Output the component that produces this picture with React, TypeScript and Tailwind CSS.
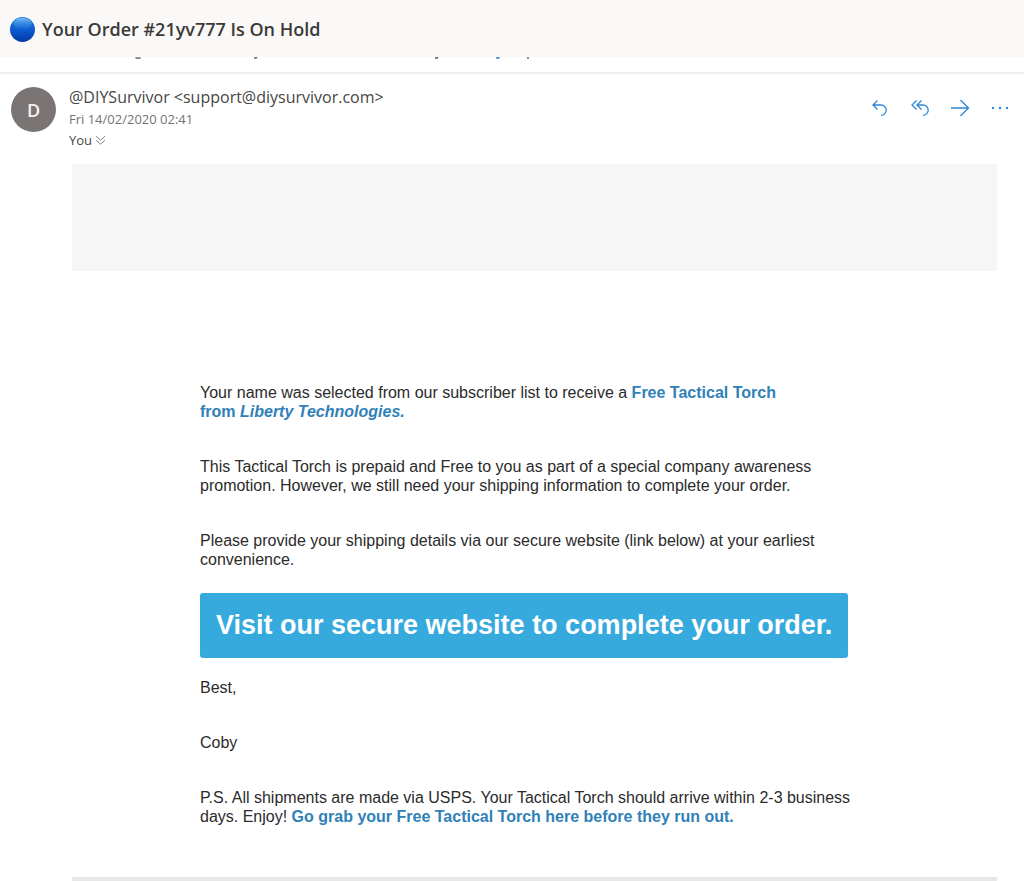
import type { ReactNode } from "react";

function IconButton({ label, children }: { label: string; children: ReactNode }) {
  return (
    <button
      type="button"
      aria-label={label}
      className="flex h-8 w-10 cursor-pointer items-center justify-center text-[#2b88d8]"
    >
      <svg
        width="22"
        height="22"
        viewBox="0 0 22 22"
        fill="none"
        stroke="currentColor"
        strokeWidth="1.3"
        aria-hidden="true"
      >
        {children}
      </svg>
    </button>
  );
}

function SubjectHeader() {
  return (
    <header className="flex h-[57px] items-center gap-[7px] bg-[#faf9f8] px-[10px] pt-px">
      <svg width="25" height="25" viewBox="0 0 24 24" className="shrink-0" aria-hidden="true">
        <defs>
          <linearGradient id="ball" x1="0" y1="0" x2="0" y2="1">
            <stop offset="0" stopColor="#1c78dc" />
            <stop offset="0.45" stopColor="#0d5fd3" />
            <stop offset="1" stopColor="#0439a8" />
          </linearGradient>
          <linearGradient id="shine" x1="0" y1="0" x2="0" y2="1">
            <stop offset="0" stopColor="#7ab8f4" />
            <stop offset="1" stopColor="#2a80e2" stopOpacity="0.2" />
          </linearGradient>
        </defs>
        <circle cx="12" cy="12" r="12" fill="url(#ball)" />
        <ellipse cx="12" cy="6.4" rx="8.8" ry="5.6" fill="url(#shine)" />
      </svg>
      <h1 className="text-lg leading-6 font-semibold text-[#3b3a39]">
        Your Order #21yv777 Is On Hold
      </h1>
    </header>
  );
}

function ScrolledPreview() {
  return (
    <div className="box-content h-[15px] border-b-2 border-[#efeeed]">
      <svg width="540" height="3" viewBox="0 0 540 3" fill="none" strokeWidth="1.4" aria-hidden="true" className="block">
        <path d="M135.5 0.5q2.5 1.5 5 0M254 1h2l1-1M435 1h2l1-1M528 0v2" stroke="#605e5c" />
        <path d="M496 1h2.5l1-1" stroke="#2b88d8" />
      </svg>
    </div>
  );
}

function MessageHeader() {
  return (
    <section className="flex items-start pt-[13px] pr-1 pl-[11px]">
      <div className="flex size-[45px] shrink-0 items-center justify-center rounded-full bg-[#7a7574] text-lg font-semibold text-[#f3f2f1]">
        D
      </div>
      <div className="min-w-0 grow pl-[13px]">
        <p className="text-base leading-[21px] text-[#484644]">
          @DIYSurvivor &lt;support@diysurvivor.com&gt;
        </p>
        <p className="text-[13px] leading-[22px] text-[#767472]">Fri 14/02/2020 02:41</p>
        <button
          type="button"
          className="flex cursor-pointer items-center gap-[3px] text-[13px] leading-5 text-[#484644]"
        >
          You
          <svg width="11" height="11" viewBox="0 0 11 11" fill="none" stroke="#8a8886" aria-hidden="true">
            <path d="M1 1.2l4.5 4 4.5-4M1 5.2l4.5 4 4.5-4" />
          </svg>
        </button>
      </div>
      <div className="flex shrink-0 pt-[5px]">
        <IconButton label="Reply">
          <path d="M8.5 3.5L4 8l4.5 4.5M4 8h8a5.2 5.2 0 0 1 0 10.4" />
        </IconButton>
        <IconButton label="Reply all">
          <path d="M7.5 3.5L3 8l4.5 4.5M12.5 3.5L8 8l4.5 4.5M8 8h6a5.2 5.2 0 0 1 0 10.4" />
        </IconButton>
        <IconButton label="Forward">
          <path d="M2 11h17.5M11.5 3l8 8-8 8" />
        </IconButton>
        <IconButton label="More actions">
          <g fill="currentColor" stroke="none">
            <circle cx="4" cy="11" r="1.2" />
            <circle cx="11" cy="11" r="1.2" />
            <circle cx="18" cy="11" r="1.2" />
          </g>
        </IconButton>
      </div>
    </section>
  );
}

function MessageBody() {
  return (
    <article className="mx-auto flex w-full max-w-[669px] flex-col items-start font-['Liberation_Sans',Arial,sans-serif] text-base leading-[19px] text-[#2b2b2b]">
      <div className="flex flex-col gap-9">
        <p>
          Your name was selected from our subscriber list to receive a{" "}
          <a href="#torch" className="font-bold text-[#2f81b7]">
            Free Tactical Torch
            <br />
            from <em>Liberty Technologies.</em>
          </a>
        </p>
        <p>
          This Tactical Torch is prepaid and Free to you as part of a special company awareness
          <br />
          promotion. However, we still need your shipping information to complete your order.
        </p>
        <p>
          Please provide your shipping details via our secure website (link below) at your earliest
          <br />
          convenience.
        </p>
      </div>
      <a
        href="#order"
        className="mt-6 mb-5 rounded-[3px] bg-[#36aadd] px-4 py-4 text-[27px] leading-[33px] font-bold text-white"
      >
        Visit our secure website to complete your order.
      </a>
      <div className="flex flex-col gap-9">
        <p>Best,</p>
        <p>Coby</p>
        <p>
          P.S. All shipments are made via USPS. Your Tactical Torch should arrive within 2-3 business
          <br />
          days. Enjoy!{" "}
          <a href="#grab" className="font-bold text-[#2f81b7]">
            Go grab your Free Tactical Torch here before they run out.
          </a>
        </p>
      </div>
    </article>
  );
}

export default function App() {
  return (
    <main className="bg-white font-['Open_Sans','Noto_Sans',sans-serif]">
      <SubjectHeader />
      <ScrolledPreview />
      <MessageHeader />
      <div className="mt-[14px] mr-[27px] ml-[72px]">
        <div className="mb-28 h-[107px] bg-[#f6f6f6]" />
        <MessageBody />
        <div className="mt-[51px] h-1 bg-[#e7e7e7]" />
      </div>
    </main>
  );
}
